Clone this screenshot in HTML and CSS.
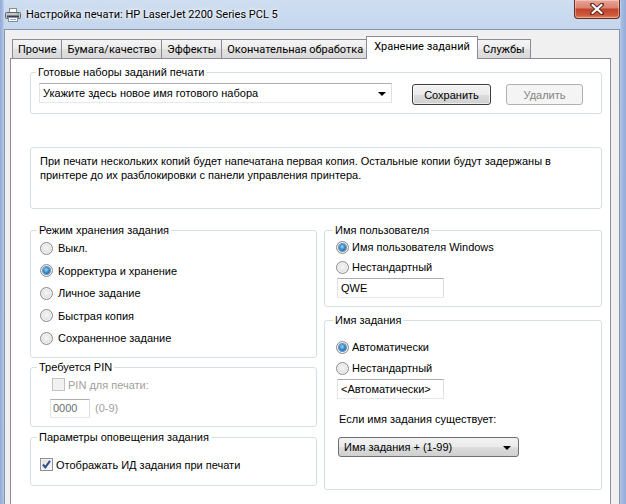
FILE: index.html
```html
<!DOCTYPE html>
<html lang="ru">
<head>
  <meta charset="UTF-8"/>
  <title>Настройка печати</title>
  <link rel="stylesheet" href="styles.css">
</head>
<body>
  <div class="window">
    <div class="titlebar">
      <svg class="app-icon" width="16" height="16" viewBox="0 0 16 16">
        <rect x="4.5" y="1.5" width="7" height="4" fill="#fff" stroke="#8c8c8c"/>
        <rect x="0.5" y="5.5" width="15" height="6" rx="1" fill="#c3c6ca" stroke="#5f6368"/>
        <rect x="2" y="8.5" width="12" height="2" fill="#40444a"/>
        <rect x="12" y="6.5" width="2" height="1" fill="#4fb04f"/>
        <rect x="3.5" y="10.5" width="9" height="4" fill="#fff" stroke="#7f8ea8"/>
        <line x1="5" y1="12.5" x2="11" y2="12.5" stroke="#9aa8c2"/>
      </svg>
      <span class="title">Настройка печати: HP LaserJet 2200 Series PCL 5</span>
      <button class="close" type="button">
        <svg width="14" height="12" viewBox="0 0 14 12">
          <path d="M2 1.5 L12 10.5 M12 1.5 L2 10.5" stroke="#5a2a22" stroke-width="4" stroke-linecap="round"/>
          <path d="M2.5 2 L11.5 10 M11.5 2 L2.5 10" stroke="#fff" stroke-width="2.2" stroke-linecap="round"/>
        </svg>
      </button>
    </div>

    <div class="client">
      <div class="tabs">
        <div class="tab">Прочие</div>
        <div class="tab">Бумага/качество</div>
        <div class="tab">Эффекты</div>
        <div class="tab">Окончательная обработка</div>
        <div class="tab active">Хранение заданий</div>
        <div class="tab">Службы</div>
      </div>

      <div class="panel">
        <fieldset class="group presets">
          <legend>Готовые наборы заданий печати</legend>
          <div class="preset-row">
            <div class="combo edit">
              <span>Укажите здесь новое имя готового набора</span>
              <i class="arrow"></i>
            </div>
            <button class="btn default" type="button">Сохранить</button>
            <button class="btn" type="button" disabled>Удалить</button>
          </div>
        </fieldset>

        <div class="group note">
          При печати нескольких копий будет напечатана первая копия. Остальные копии будут задержаны в
          принтере до их разблокировки с панели управления принтера.
        </div>

        <div class="columns">
          <div class="col">
            <fieldset class="group mode">
              <legend>Режим хранения задания</legend>
              <label class="radio"><i></i>Выкл.</label>
              <label class="radio"><i class="on"></i>Корректура и хранение</label>
              <label class="radio"><i></i>Личное задание</label>
              <label class="radio"><i></i>Быстрая копия</label>
              <label class="radio"><i></i>Сохраненное задание</label>
            </fieldset>

            <fieldset class="group pin">
              <legend>Требуется PIN</legend>
              <label class="check off"><i></i>PIN для печати:</label>
              <div class="pin-row">
                <div class="textbox off pin-box">0000</div>
                <span class="hint">(0-9)</span>
              </div>
            </fieldset>

            <fieldset class="group notify">
              <legend>Параметры оповещения задания</legend>
              <label class="check">
                <i>
                  <svg width="11" height="11" viewBox="0 0 11 11">
                    <path d="M2 5.5 L4.3 8.3 L9 1.8" fill="none" stroke="#2f4c8f" stroke-width="2"/>
                  </svg>
                </i>Отображать ИД задания при печати
              </label>
            </fieldset>
          </div>

          <div class="col">
            <fieldset class="group user">
              <legend>Имя пользователя</legend>
              <label class="radio"><i class="on"></i>Имя пользователя Windows</label>
              <label class="radio"><i></i>Нестандартный</label>
              <div class="textbox name-box">QWE</div>
            </fieldset>

            <fieldset class="group job">
              <legend>Имя задания</legend>
              <label class="radio"><i class="on"></i>Автоматически</label>
              <label class="radio"><i></i>Нестандартный</label>
              <div class="textbox name-box">&lt;Автоматически&gt;</div>
              <div class="exists-label">Если имя задания существует:</div>
              <div class="combo list">
                <span>Имя задания + (1-99)</span>
                <i class="arrow"></i>
              </div>
            </fieldset>
          </div>
        </div>
      </div>
    </div>
  </div>
</body>
</html>
```

FILE: styles.css
```css
* {
  box-sizing: border-box;
}

body {
  margin: 0;
  font-family: "Liberation Sans", Arial, sans-serif;
  font-size: 11px;
  color: #000;
  background: #bcd0e9;
}

/* Aero window frame */
.window {
  width: 626px;
  height: 504px;
  display: flex;
  flex-direction: column;
  overflow: hidden;
  background:
    linear-gradient(90deg, #93aad8 0, #a9bee2 3px, transparent 4px),
    linear-gradient(270deg, #93aad8 0, #a9bee2 5px, transparent 6px),
    linear-gradient(180deg, #cfdef1 0, #c0d3eb 40px, #b7cbe7 100%);
}

.titlebar {
  height: 29px;
  flex: none;
  display: flex;
  align-items: flex-start;
}

.app-icon {
  margin: 7px 0 0 5px;
  flex: none;
}

.title {
  margin-left: 5px;
  line-height: 29px;
  font-family: Roboto, "Noto Sans", sans-serif;
  font-size: 11px;
  color: #000;
  text-shadow: 0 0 6px #fff, 0 0 3px #fff;
}

.close {
  margin-left: auto;
  margin-right: 6px;
  width: 46px;
  height: 19px;
  padding: 0;
  border: 1px solid #6b2b20;
  border-top: none;
  border-radius: 0 0 4px 4px;
  background: linear-gradient(180deg, #e9a597 0, #d9806e 45%, #c2412b 50%, #cf5a3c 85%, #e38a63 100%);
  box-shadow: inset 0 0 0 1px rgba(255, 255, 255, 0.35);
  display: flex;
  align-items: center;
  justify-content: center;
}

/* Dialog client area */
.client {
  flex: 1;
  margin: 0 6px 0 4px;
  background: #f0f0f0;
  border: 1px solid #8494ad;
  border-bottom: none;
  padding: 6px 8px 0 5px;
  min-height: 0;
}

.tabs {
  display: flex;
  align-items: flex-end;
  height: 22px;
  padding-left: 2px;
  font-family: Roboto, "Noto Sans", sans-serif;
  font-size: 11px;
}

.tab {
  height: 19px;
  padding: 0 5px;
  margin-right: -1px;
  line-height: 19px;
  border: 1px solid #898c95;
  border-bottom: none;
  background: linear-gradient(180deg, #f4f4f4 0, #ececec 50%, #e1e1e1 51%, #d9d9d9 100%);
  white-space: nowrap;
}

.tab.active {
  position: relative;
  z-index: 1;
  height: 23px;
  margin: 0 -1px -1px -2px;
  padding: 0 7px;
  line-height: 19px;
  background: #fff;
}

.panel {
  position: relative;
  width: 601px;
  height: 470px;
  border: 1px solid #898c95;
  background: #fff;
  padding: 7px 8px 0 19px;
}

/* Group boxes */
.group {
  margin: 0;
  border: 1px solid #d5dfe5;
  border-radius: 3px;
  padding: 0 8px 0 9px;
  min-width: 0;
}

.group legend {
  padding: 0 2px;
  margin-left: -3px;
  line-height: 13px;
}

.presets {
  padding: 4px 8px 8px;
}

.preset-row {
  display: flex;
  align-items: flex-start;
}

.note {
  margin-top: 33px;
  height: 62px;
  padding: 6px 9px;
  line-height: 14px;
}

.columns {
  display: grid;
  grid-template-columns: 287px 278px;
  column-gap: 7px;
  margin-top: 15px;
}

.col {
  display: flex;
  flex-direction: column;
}

/* Inputs */
.textbox,
.combo.edit {
  height: 20px;
  border: 1px solid;
  border-color: #abadb3 #dbdfe6 #e3e9ef #e2e3ea;
  background: #fff;
  padding-left: 3px;
  line-height: 18px;
  white-space: nowrap;
}

.combo {
  position: relative;
  display: flex;
  align-items: center;
}

.combo .arrow {
  position: absolute;
  right: 5px;
  top: 8px;
  width: 0;
  height: 0;
  border-left: 4px solid transparent;
  border-right: 4px solid transparent;
  border-top: 4px solid #000;
}

.combo.edit {
  width: 353px;
}

.combo.list {
  width: 181px;
  height: 20px;
  margin: 11px 0 0 2px;
  padding-left: 5px;
  border: 1px solid #707070;
  border-radius: 3px;
  background: linear-gradient(180deg, #f2f2f2 0, #ebebeb 50%, #dddddd 51%, #cfcfcf 100%);
}

.combo.list .arrow {
  right: 7px;
}

.btn {
  height: 21px;
  margin-top: 1px;
  padding: 0;
  font-family: inherit;
  font-size: 11px;
  color: #000;
  border: 1px solid #707070;
  border-radius: 3px;
  background: linear-gradient(180deg, #f2f2f2 0, #ebebeb 50%, #dddddd 51%, #cfcfcf 100%);
  box-shadow: inset 0 0 0 1px rgba(255, 255, 255, 0.6);
}

.btn.default {
  width: 79px;
  margin-left: 20px;
  border-color: #3c3c3c;
}

.btn:disabled {
  width: 77px;
  margin-left: 15px;
  color: #838383;
  border-color: #adb2b5;
  background: #f4f4f4;
  box-shadow: none;
}

/* Radios and checkboxes */
.radio,
.check {
  display: flex;
  align-items: center;
  white-space: nowrap;
}

.radio i,
.check i {
  flex: none;
  width: 13px;
  height: 13px;
  margin-right: 5px;
  display: flex;
  align-items: center;
  justify-content: center;
}

.radio i {
  border-radius: 50%;
  border: 1px solid #8b8b8b;
  background: radial-gradient(circle at 50% 45%, #f6f6f6 0, #e7e7e7 45%, #cfcfcf 100%);
  box-shadow: inset 0 0 0 1px #f4f4f4;
}

.radio i.on::after {
  content: "";
  width: 7px;
  height: 7px;
  border-radius: 50%;
  background: radial-gradient(circle at 45% 40%, #9ed8f7 0, #3c8ccc 45%, #0c4a86 100%);
  box-shadow: 0 0 0 1px #5f93c0;
}

.check i {
  border: 1px solid #8e8f8f;
  background: linear-gradient(135deg, #dcdcdc 0, #fbfbfb 100%);
  box-shadow: inset 0 0 0 1px #f4f4f4;
}

.check.off {
  color: #a0a0a0;
}

.check.off i {
  border-color: #c2c2c2;
  background: #f1f1f1;
}

.mode .radio {
  height: 22.5px;
}

.mode {
  padding-bottom: 7px;
}

.pin {
  margin-top: 3px;
  padding: 2px 8px 8px 9px;
}

.pin .check {
  height: 18px;
  margin-left: 12px;
}

.pin .check i {
  margin-right: 3px;
}

.pin-row {
  display: flex;
  align-items: center;
  margin-top: 5px;
  margin-left: 10px;
}

.pin-box {
  width: 40px;
  height: 19px;
  line-height: 17px;
  padding-left: 2px;
}

.textbox.off {
  color: #6d6d6d;
}

.hint {
  margin-left: 5px;
  color: #a0a0a0;
}

.notify {
  margin-top: 4px;
  padding: 12px 8px 11px 9px;
}

.notify .check {
  height: 18px;
}

.notify .check i {
  margin-right: 3px;
}

.user {
  padding: 0 8px 8px 11px;
}

.user .radio,
.job .radio {
  height: 20px;
}

.user .radio i,
.job .radio i {
  margin-right: 3px;
}

.name-box {
  width: 107px;
  margin-left: 1px;
  margin-top: 1px;
}

.job {
  margin-top: 7px;
  padding: 10px 8px 32px 11px;
}

.job .radio + .radio {
  margin-top: 1px;
}

.exists-label {
  margin: 13px 0 0 3px;
  line-height: 14px;
}
```
